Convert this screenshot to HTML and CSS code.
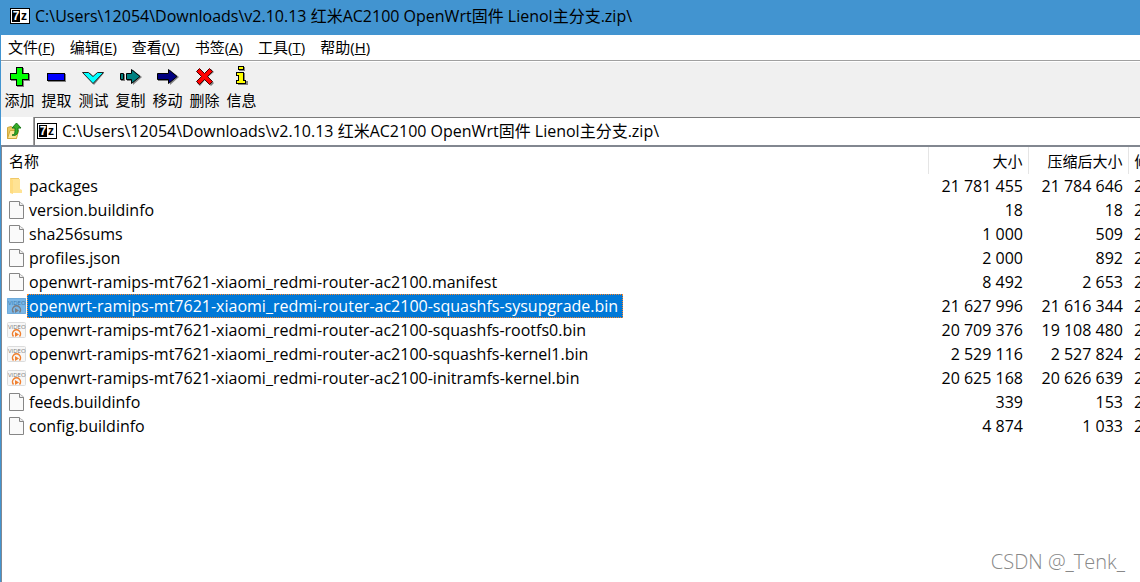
FILE: index.html
```
<!DOCTYPE html>
<html lang="zh-Hans">
<head>
    <meta charset="UTF-8">
    <meta name="viewport" content="width=device-width, initial-scale=1.0">
    <title>7-Zip</title>
    <link rel="stylesheet" href="styles.css">
</head>
<body>
    <!-- 共用图标 -->
    <svg class="defs" width="0" height="0">
        <symbol id="file" viewBox="0 0 20 20">
            <path d="M2.5 1.5H12L16.5 5V18.5H2.5Z" fill="#fafafa" stroke="#868686"/>
            <path d="M12.5 1.5V5.5H16.5" fill="#eee" stroke="#868686"/>
        </symbol>
        <symbol id="video" viewBox="0 0 20 18">
            <rect x="0.5" y="1.5" width="18" height="15" rx="1" fill="#f7f7f7" stroke="#dcdcdc"/>
            <text x="1" y="8" font-size="6" fill="#777">VIDEO</text>
            <path d="M6.5 15.5A4 4 0 1 1 12.5 15.5" fill="none" stroke="#f08030" stroke-width="1.5"/>
            <path d="M8 11L12 13.500L8 16Z" fill="#f08030"/>
        </symbol>
    </svg>

    <div class="window">
        <header class="titlebar">
            <span class="logo"><b>7</b><i>z</i></span>
            <span>C:\Users\12054\Downloads\v2.10.13 红米AC2100 OpenWrt固件 Lienol主分支.zip\</span>
        </header>

        <nav class="menu">
            <button>文件(<u>F</u>)</button>
            <button>编辑(<u>E</u>)</button>
            <button>查看(<u>V</u>)</button>
            <button>书签(<u>A</u>)</button>
            <button>工具(<u>T</u>)</button>
            <button>帮助(<u>H</u>)</button>
        </nav>

        <div class="toolbar">
            <button>
                <svg width="23" height="23" shape-rendering="crispEdges">
                    <path d="M9 3H16V9H22V16H16V22H9V16H3V9H9Z" fill="#808080"/>
                    <path d="M8.500 2.500H14.500V8.500H20.500V14.500H14.500V20.500H8.500V14.500H2.500V8.500H8.500Z" fill="#0f0" stroke="#000"/>
                </svg>
                添加
            </button>
            <button>
                <svg width="23" height="23" shape-rendering="crispEdges">
                    <path d="M3 9H21V17H3Z" fill="#808080"/>
                    <path d="M2.500 8.500H19.500V15.500H2.500Z" fill="#00f" stroke="#000"/>
                </svg>
                提取
            </button>
            <button>
                <svg width="23" height="23">
                    <path d="M2 8H8L12 12L16 8H22L12 20Z" fill="#808080"/>
                    <path d="M0.500 7.500H6.500L11 11.500L15.500 7.500H21.500L11 18.500Z" fill="#0ff" stroke="#222"/>
                </svg>
                测试
            </button>
            <button>
                <svg width="23" height="23">
                    <path d="M2 9H6V16H2ZM8 9H14V5L23 12L14 20V16H8Z" fill="#808080"/>
                    <path d="M1.500 8.500H4.500V14.500H1.500ZM7.500 8.500H12.500V4.500L21 11.500L12.500 18.500V14.500H7.500Z" fill="#008080" stroke="#000"/>
                </svg>
                复制
            </button>
            <button>
                <svg width="23" height="23">
                    <path d="M2 9H14V5L23 12L14 20V16H2Z" fill="#808080"/>
                    <path d="M1.500 8.500H12.500V4.500L21 11.500L12.500 18.500V14.500H1.500Z" fill="#000080" stroke="#000"/>
                </svg>
                移动
            </button>
            <button>
                <svg width="23" height="23">
                    <path d="M4 7L7 4L12 9L18 4L21 7L15 12L21 18L18 21L12 15L7 21L4 18L9 12Z" fill="#808080"/>
                    <path d="M3.500 6.500L6.500 3.500L11.500 8.500L16.500 3.500L19.500 6.500L14.500 11.500L19.500 16.500L16.500 19.500L11.500 14.500L6.500 19.500L3.500 16.500L8.500 11.500Z" fill="#f00" stroke="#400"/>
                </svg>
                删除
            </button>
            <button>
                <svg width="23" height="23" shape-rendering="crispEdges">
                    <path d="M9 2H15V6H9ZM8 8H15V16H18V20H8V16H10V12H8Z" fill="#808080"/>
                    <path d="M8.500 1.500H13.500V4.500H8.500ZM6.500 7.500H13.500V15.500H15.500V18.500H6.500V15.500H8.500V10.500H6.500Z" fill="#ff0" stroke="#000"/>
                </svg>
                信息
            </button>
        </div>

        <div class="address">
            <button class="up" aria-label="上一级">
                <svg width="16" height="18">
                    <path d="M1.500 5.500L5 4.500L6.500 5.500H10.500V16.500H1.500Z" fill="#e8c860" stroke="#d0a83c"/>
                    <path d="M1.500 16.500L4 8.500H12.500L10.500 16.500Z" fill="#fbe698" stroke="#d0a83c"/>
                    <path d="M6 13C9.500 13 9 10 9 6H6L10.500 1L15 6H12C12.500 11 11 14.500 6 13Z" fill="#35ad28" stroke="#187818"/>
                </svg>
            </button>
            <div class="path">
                <span class="logo"><b>7</b><i>z</i></span>
                <input type="text" aria-label="路径" value="C:\Users\12054\Downloads\v2.10.13 红米AC2100 OpenWrt固件 Lienol主分支.zip\">
            </div>
        </div>

        <main class="list">
            <table>
                <colgroup>
                    <col>
                    <col class="col-size">
                    <col class="col-size">
                    <col class="col-date">
                </colgroup>
                <thead>
                    <tr><th>名称</th><th>大小</th><th>压缩后大小</th><th>修</th></tr>
                </thead>
                <tbody>
                    <tr>
                        <td><div class="name">
                            <svg width="20" height="20"><path d="M3 2H12V17H3Z" fill="#f0c868"/><path d="M5 3H13V13L15 14V17H5Z" fill="#ffe394"/><path d="M3 2L6 4V18L3 17Z" fill="#ffdc80"/></svg>
                            <span>packages</span>
                        </div></td>
                        <td>21 781 455</td><td>21 784 646</td><td>2</td>
                    </tr>
                    <tr>
                        <td><div class="name"><svg width="20" height="20"><use href="#file" width="20" height="20"/></svg><span>version.buildinfo</span></div></td>
                        <td>18</td><td>18</td><td>2</td>
                    </tr>
                    <tr>
                        <td><div class="name"><svg width="20" height="20"><use href="#file" width="20" height="20"/></svg><span>sha256sums</span></div></td>
                        <td>1 000</td><td>509</td><td>2</td>
                    </tr>
                    <tr>
                        <td><div class="name"><svg width="20" height="20"><use href="#file" width="20" height="20"/></svg><span>profiles.json</span></div></td>
                        <td>2 000</td><td>892</td><td>2</td>
                    </tr>
                    <tr>
                        <td><div class="name"><svg width="20" height="20"><use href="#file" width="20" height="20"/></svg><span>openwrt-ramips-mt7621-xiaomi_redmi-router-ac2100.manifest</span></div></td>
                        <td>8 492</td><td>2 653</td><td>2</td>
                    </tr>
                    <tr class="selected">
                        <td><div class="name"><svg width="20" height="18"><use href="#video" width="20" height="18"/><rect y="1" width="19" height="16" fill="#0078d7" opacity="0.5"/></svg><span>openwrt-ramips-mt7621-xiaomi_redmi-router-ac2100-squashfs-sysupgrade.bin</span></div></td>
                        <td>21 627 996</td><td>21 616 344</td><td>2</td>
                    </tr>
                    <tr>
                        <td><div class="name"><svg width="20" height="18"><use href="#video" width="20" height="18"/></svg><span>openwrt-ramips-mt7621-xiaomi_redmi-router-ac2100-squashfs-rootfs0.bin</span></div></td>
                        <td>20 709 376</td><td>19 108 480</td><td>2</td>
                    </tr>
                    <tr>
                        <td><div class="name"><svg width="20" height="18"><use href="#video" width="20" height="18"/></svg><span>openwrt-ramips-mt7621-xiaomi_redmi-router-ac2100-squashfs-kernel1.bin</span></div></td>
                        <td>2 529 116</td><td>2 527 824</td><td>2</td>
                    </tr>
                    <tr>
                        <td><div class="name"><svg width="20" height="18"><use href="#video" width="20" height="18"/></svg><span>openwrt-ramips-mt7621-xiaomi_redmi-router-ac2100-initramfs-kernel.bin</span></div></td>
                        <td>20 625 168</td><td>20 626 639</td><td>2</td>
                    </tr>
                    <tr>
                        <td><div class="name"><svg width="20" height="20"><use href="#file" width="20" height="20"/></svg><span>feeds.buildinfo</span></div></td>
                        <td>339</td><td>153</td><td>2</td>
                    </tr>
                    <tr>
                        <td><div class="name"><svg width="20" height="20"><use href="#file" width="20" height="20"/></svg><span>config.buildinfo</span></div></td>
                        <td>4 874</td><td>1 033</td><td>2</td>
                    </tr>
                </tbody>
            </table>
        </main>
    </div>

    <div class="watermark">CSDN @_Tenk_</div>
</body>
</html>
```

FILE: styles.css
```
* {
    box-sizing: border-box;
}

body {
    margin: 0;
    font-family: "Open Sans", "Noto Sans CJK SC", sans-serif;
    font-size: 15px;
    line-height: 24px;
    color: #000;
    background: #fff;
    overflow: hidden;
}

button {
    font: inherit;
    color: inherit;
    background: none;
    border: none;
    padding: 0;
}

.defs {
    position: absolute;
}

.window {
    display: flex;
    flex-direction: column;
    min-height: 100vh;
    border-left: 1px solid #4294d0;
}

.titlebar {
    display: flex;
    align-items: center;
    gap: 5px;
    height: 35px;
    padding: 0 9px 4px;
    background: #4294d0;
    font-size: 16px;
    white-space: nowrap;
}

/* 7z 标志 */
.logo {
    display: flex;
    flex: none;
    width: 20px;
    height: 16px;
    padding: 1px;
    border: 1px solid #000;
    background: #fff;
    font-family: "Liberation Sans", sans-serif;
    font-size: 12px;
    line-height: 12px;
    text-align: center;
}

.logo b {
    width: 8px;
    color: #fff;
    background: #000;
}

.logo i {
    width: 8px;
    font-style: normal;
    font-weight: bold;
}

.menu {
    display: flex;
    gap: 15px;
    height: 26px;
    padding: 0 7px 2px;
    border-bottom: 1px solid #a0a0a0;
}

.toolbar {
    display: flex;
    height: 56px;
    padding-top: 3px;
    border-top: 1px solid #fff;
    background: #f0f0f0;
}

.toolbar button {
    display: flex;
    flex-direction: column;
    align-items: center;
    width: 37px;
}

.address {
    display: flex;
    height: 28px;
}

.up {
    display: flex;
    align-items: center;
    width: 33px;
    padding-left: 5px;
    border-right: 1px solid #a0a0a0;
}

.path {
    display: flex;
    flex: 1;
    align-items: center;
    gap: 5px;
    padding: 0 0 1px 2px;
    border-top: 1px solid #7a7a7a;
    border-left: 1px solid #7a7a7a;
}

.path input {
    flex: 1;
    height: 24px;
    padding: 0;
    border: none;
    outline: none;
    font: inherit;
    font-size: 16px;
    color: inherit;
}

.list {
    flex: 1;
    border-top: 2px solid #828790;
    border-left: 1px solid #828790;
}

table {
    width: 100%;
    table-layout: fixed;
    border-collapse: collapse;
}

.col-size {
    width: 100px;
}

.col-date {
    width: 12px;
}

th,
td {
    height: 24px;
    padding: 0 5px;
    font-weight: normal;
    text-align: right;
    white-space: nowrap;
    overflow: hidden;
}

td {
    font-size: 16px;
}

th {
    height: 27px;
    border-right: 1px solid #e5e5e5;
}

th:first-child {
    padding-left: 7px;
    text-align: left;
}

th:last-child,
td:last-child {
    padding: 0 0 0 6px;
    border-right: none;
    text-align: left;
}

td:first-child {
    padding: 0 0 0 5px;
}

.name {
    display: flex;
    align-items: center;
}

.name svg {
    flex: none;
}

.name span {
    padding: 0 5px 0 2px;
}

.selected .name span {
    color: #fff;
    background: #0078d7;
    outline: 1px dotted #ff8728;
    outline-offset: -1px;
}

.watermark {
    position: absolute;
    right: 15px;
    bottom: 6px;
    font-size: 20px;
    font-weight: 300;
    line-height: 28px;
    color: #888;
}
```
